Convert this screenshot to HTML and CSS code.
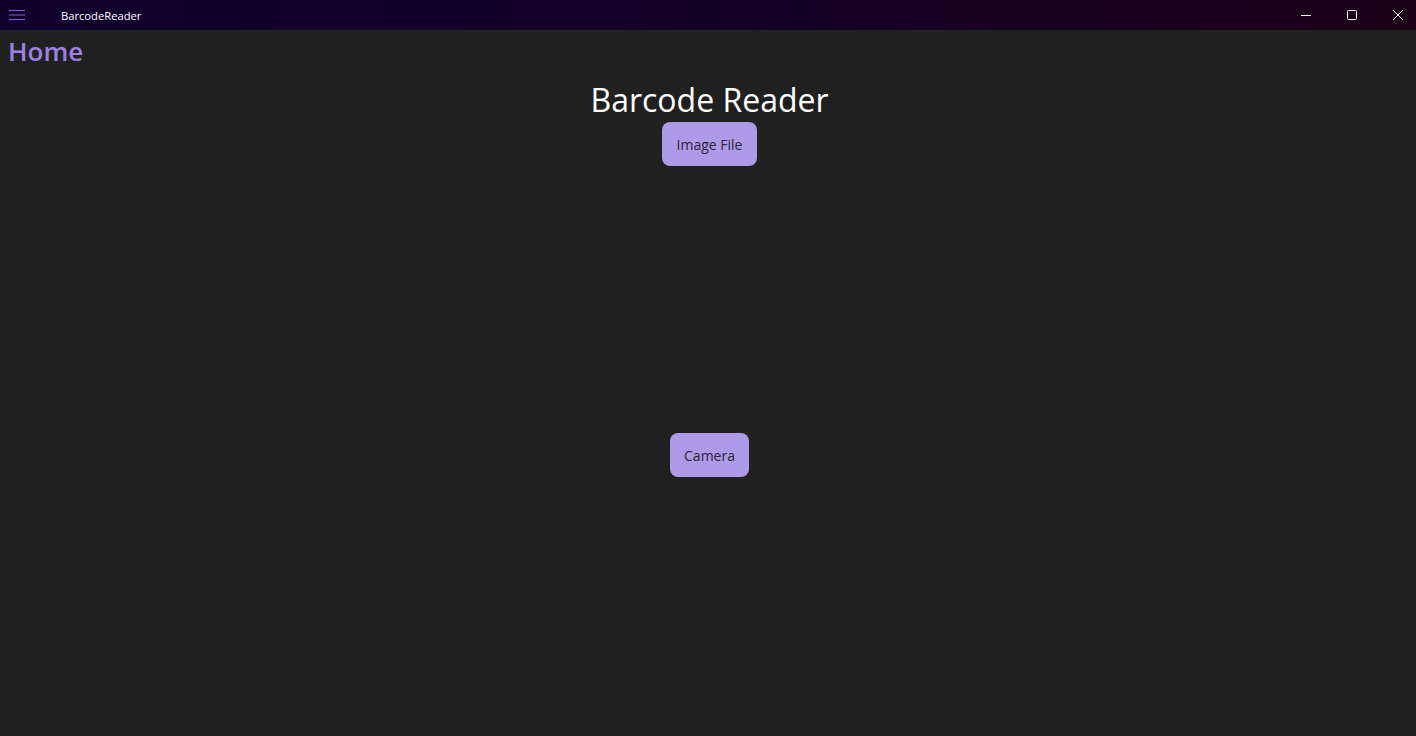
FILE: index.html
```html
<!DOCTYPE html>
<html>
<head>
<meta charset="utf-8">
<link rel="stylesheet" href="styles.css">
</head>
<body>
<div class="titlebar">
  <div class="tb-left">
    <svg class="hamburger" width="16" height="12" viewBox="0 0 16 12"><path d="M0 1.5H16M0 6H16M0 10.5H16" stroke="#7a5fd6" stroke-width="1"/></svg>
    <span class="app-name">BarcodeReader</span>
  </div>
  <div class="tb-controls">
    <div class="ctl"><svg width="10" height="10" viewBox="0 0 10 10"><path d="M0 5.5H10" stroke="#fff" stroke-width="1"/></svg></div>
    <div class="ctl"><svg width="10" height="10" viewBox="0 0 10 10"><rect x="0.5" y="0.5" width="9" height="9" rx="1" fill="none" stroke="#fff" stroke-width="1"/></svg></div>
    <div class="ctl"><svg width="10" height="10" viewBox="0 0 10 10"><path d="M0 0L10 10M10 0L0 10" stroke="#fff" stroke-width="1"/></svg></div>
  </div>
</div>
<main class="content">
  <h1 class="page-title">Home</h1>
  <div class="center">
    <h2 class="heading">Barcode Reader</h2>
    <button class="btn">Image File</button>
    <div class="image-area"></div>
    <button class="btn">Camera</button>
  </div>
</main>
</body>
</html>
```
FILE: styles.css
```css
html, body {
  margin: 0;
  padding: 0;
  height: 100%;
  background: #202020;
  font-family: "Open Sans", "Noto Sans", sans-serif;
  overflow: hidden;
}
.titlebar {
  height: 30px;
  display: flex;
  align-items: center;
  justify-content: space-between;
  background: linear-gradient(90deg, #11002e 0%, #140027 50%, #1c0018 100%);
  overflow: hidden;
}
.tb-left {
  display: flex;
  align-items: center;
}
.hamburger {
  margin-left: 9px;
}
.app-name {
  color: #ffffff;
  font-size: 11.2px;
  margin-left: 36px;
}
.tb-controls {
  display: flex;
  height: 30px;
  margin-right: -5px;
}
.ctl {
  width: 46px;
  height: 30px;
  display: flex;
  align-items: center;
  justify-content: center;
}
.page-title {
  margin: 0;
  padding: 4px 0 0 8px;
  font-size: 26px;
  font-weight: 600;
  color: #9b80e6;
  line-height: 34px;
}
.center {
  display: flex;
  flex-direction: column;
  align-items: center;
  margin-top: 10px;
  padding-left: 3px;
}
.heading {
  margin: 0;
  font-size: 32px;
  font-weight: 400;
  color: #ffffff;
  line-height: 44px;
}
.btn {
  font-family: "Open Sans", "Noto Sans", sans-serif;
  background: #ad9ae8;
  color: #2a2633;
  border: none;
  border-radius: 8px;
  font-size: 14px;
  height: 44px;
  padding: 0 14.5px;
  cursor: pointer;
}
.image-area {
  height: 267px;
}
```
